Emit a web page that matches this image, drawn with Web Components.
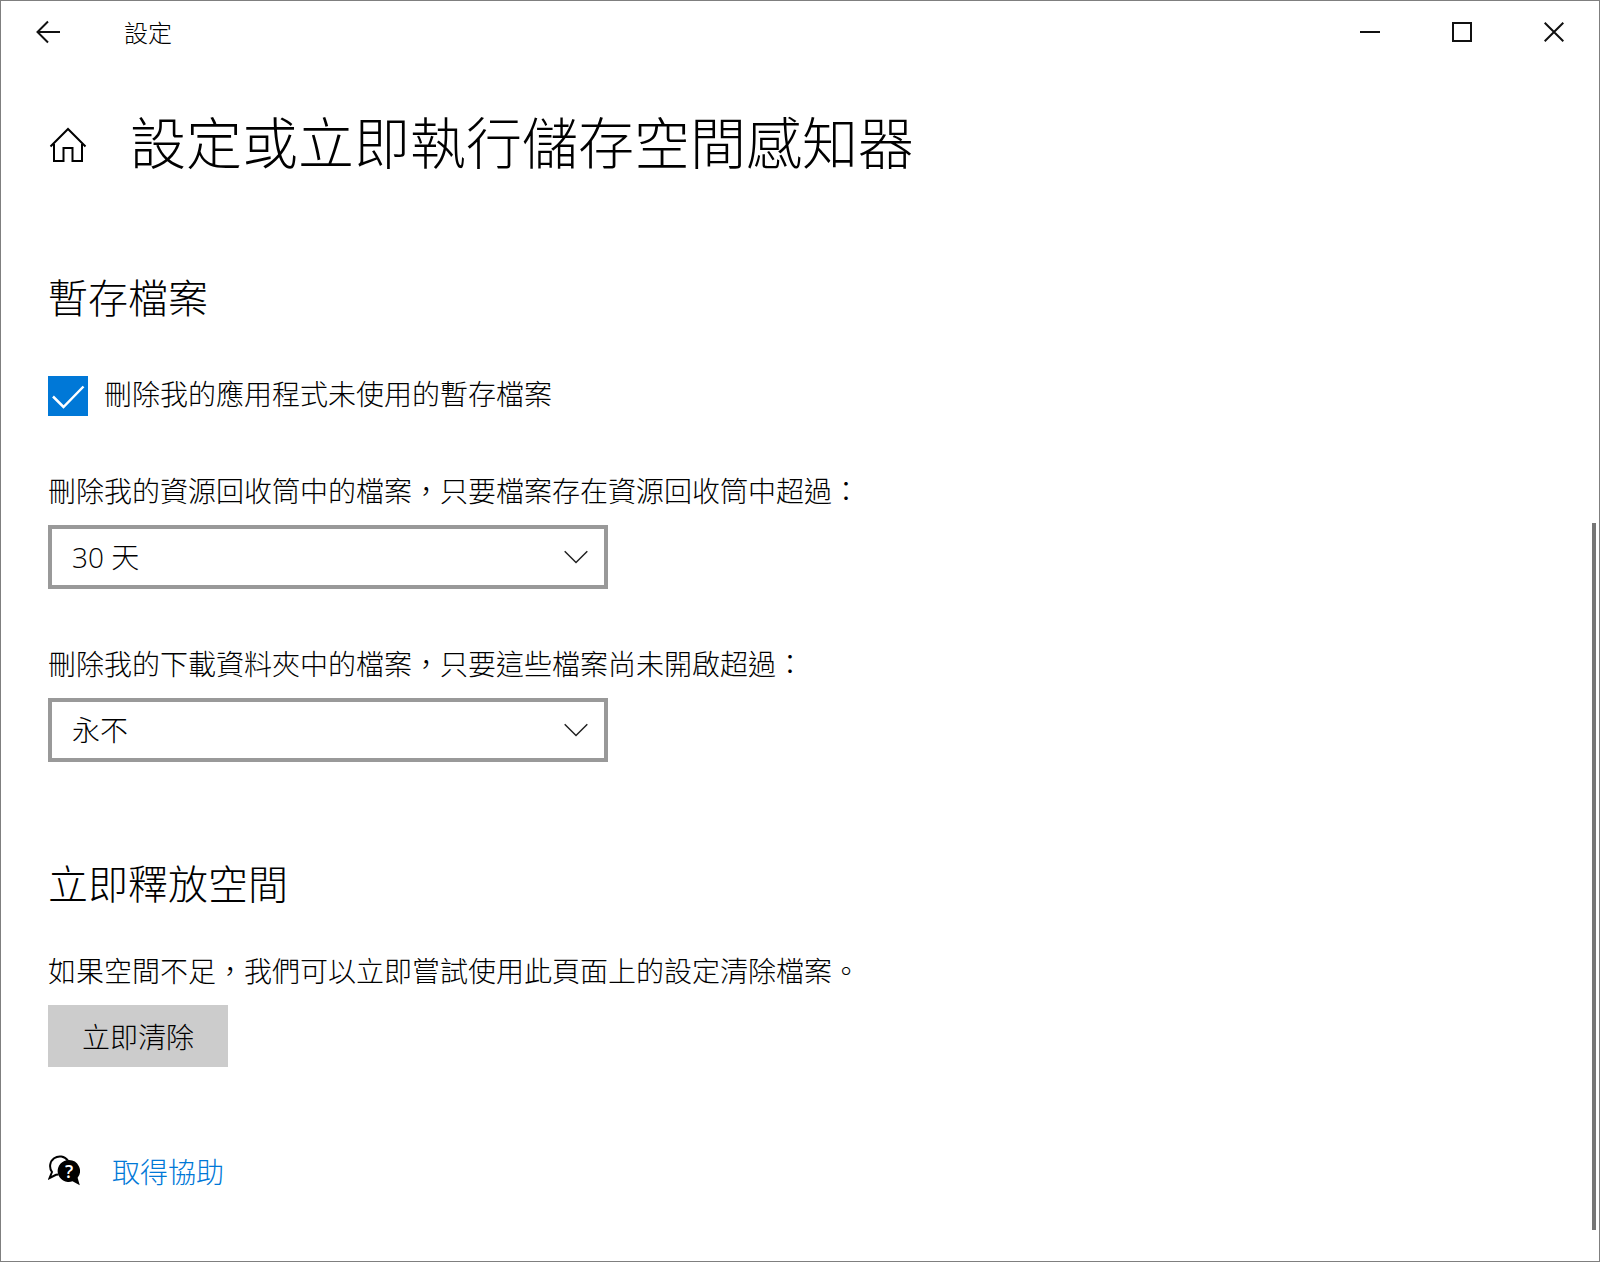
<!DOCTYPE html>
<html lang="zh-Hant">
<head>
<meta charset="utf-8">
<title>設定</title>
<style>
    html {
        height: 100%;
    }

    body {
        margin: 0;
        min-height: 100%;
        display: flex;
        flex-direction: column;
        background: #fff;
        color: #000;
        font: 300 28px/40px "Noto Sans CJK TC", sans-serif;
    }
</style>
</head>
<body>
<settings-window>
    <title-bar slot="bar">設定</title-bar>
    <page-header>設定或立即執行儲存空間感知器</page-header>
    <settings-section heading="暫存檔案">
        <check-option checked>刪除我的應用程式未使用的暫存檔案</check-option>
        <select-field options="永不|1 天|14 天|30 天|60 天" value="30 天">刪除我的資源回收筒中的檔案，只要檔案存在資源回收筒中超過：</select-field>
        <select-field options="永不|1 天|14 天|30 天|60 天" value="永不">刪除我的下載資料夾中的檔案，只要這些檔案尚未開啟超過：</select-field>
    </settings-section>
    <settings-section heading="立即釋放空間">
        <action-block label="立即清除">如果空間不足，我們可以立即嘗試使用此頁面上的設定清除檔案。</action-block>
    </settings-section>
    <help-link href="#help">取得協助</help-link>
</settings-window>

<script>
class SettingsWindow extends HTMLElement {
    constructor(){
        super();
        this.attachShadow({mode: 'open'});
        this.shadowRoot.innerHTML = `
        <style>
            :host {
                display: flex;
                flex-direction: column;
                flex: 1;
                position: relative;
                outline: 1px solid #7f7f7f;
                outline-offset: -1px;
            }

            main {
                padding: 40px 48px 48px;
            }

            .thumb {
                position: absolute;
                right: 4px;
                bottom: 32px;
                width: 4px;
                height: 56%;
                background: #767676;
            }
        </style>
        <slot name='bar'></slot>
        <main><slot></slot></main>
        <div class='thumb'></div>`;
    }
}

class TitleBar extends HTMLElement {
    constructor(){
        super();
        this.attachShadow({mode: 'open'});
        this.shadowRoot.innerHTML = `
        <style>
            :host {
                display: flex;
                align-items: stretch;
                height: 64px;
                font-size: 24px;
            }

            button {
                display: flex;
                align-items: center;
                justify-content: center;
                width: 92px;
                padding: 0;
                border: 0;
                background: none;
                color: #111;
            }

            button:active {
                background: #e5e5e5;
            }

            .back {
                width: 96px;
            }

            svg {
                fill: none;
                stroke: currentColor;
                stroke-width: 2;
            }

            .title {
                flex: 1;
                align-self: center;
                padding-left: 28px;
            }

            .controls {
                display: flex;
            }
        </style>
        <button class='back' aria-label='返回'>
            <svg width='24' height='24' viewBox='0 0 24 24'><path d='M24 12H1.5M12 1.5L1.5 12L12 22.5'/></svg>
        </button>
        <span class='title'><slot></slot></span>
        <div class='controls'>
            <button aria-label='最小化'>
                <svg width='20' height='20' viewBox='0 0 20 20'><path d='M0 10H20'/></svg>
            </button>
            <button aria-label='最大化'>
                <svg width='20' height='20' viewBox='0 0 20 20'><path d='M1 1H19V19H1Z'/></svg>
            </button>
            <button aria-label='關閉'>
                <svg width='20' height='20' viewBox='0 0 20 20'><path d='M.7 .7L19.3 19.3M19.3 .7L.7 19.3'/></svg>
            </button>
        </div>`;
    }
}

class PageHeader extends HTMLElement {
    constructor(){
        super();
        this.attachShadow({mode: 'open'});
        this.shadowRoot.innerHTML = `
        <style>
            :host {
                display: flex;
                align-items: center;
                gap: 42px;
            }

            a {
                display: flex;
                color: #000;
            }

            svg {
                fill: none;
                stroke: currentColor;
                stroke-width: 2;
            }

            h1 {
                margin: 0;
                font-size: 56px;
                font-weight: 300;
                line-height: 72px;
            }
        </style>
        <a href='#home' aria-label='首頁'>
            <svg width='40' height='46' viewBox='0 -10 40 46'>
                <path d='M2.5 19.5L20 2L37.5 19.5M6 17V34H15.5V21H24.5V34H34V17'/>
            </svg>
        </a>
        <h1><slot></slot></h1>`;
    }
}

class SettingsSection extends HTMLElement {
    constructor(){
        super();
        this.attachShadow({mode: 'open'});
        this.shadowRoot.innerHTML = `
        <style>
            :host {
                display: block;
                margin-top: 92px;
            }

            h2 {
                margin: 0 0 40px;
                font-size: 40px;
                font-weight: 300;
                line-height: 56px;
            }

            .items {
                display: flex;
                flex-direction: column;
                align-items: flex-start;
                gap: 54px;
            }
        </style>
        <section>
            <h2></h2>
            <div class='items'><slot></slot></div>
        </section>`;
    }

    connectedCallback(){
        this.shadowRoot.querySelector('h2').textContent = this.getAttribute('heading');
    }
}

class CheckOption extends HTMLElement {
    constructor(){
        super();
        this.attachShadow({mode: 'open'});
        this.shadowRoot.innerHTML = `
        <style>
            :host {
                display: block;
                padding-top: 12px;
            }

            label {
                display: grid;
                grid-template-columns: 40px auto;
                column-gap: 16px;
                line-height: 34px;
            }

            input, svg {
                grid-area: 1 / 1;
                width: 40px;
                height: 40px;
            }

            input {
                appearance: none;
                margin: 0;
                border: 4px solid #333;
            }

            input:checked {
                border: 0;
                background: #0078d7;
            }

            svg {
                fill: none;
                stroke: #fff;
                stroke-width: 2.5;
                pointer-events: none;
            }

            input:not(:checked) + svg {
                visibility: hidden;
            }
        </style>
        <label>
            <input type='checkbox'>
            <svg viewBox='0 0 40 40'><path d='M5 20.5L15.5 31L35.5 10.5'/></svg>
            <span><slot></slot></span>
        </label>`;
    }

    connectedCallback(){
        this.shadowRoot.querySelector('input').checked = this.hasAttribute('checked');
    }
}

class SelectField extends HTMLElement {
    constructor(){
        super();
        this.attachShadow({mode: 'open'});
        this.shadowRoot.innerHTML = `
        <style>
            :host {
                display: block;
            }

            label {
                display: block;
                margin-bottom: 15px;
            }

            .box {
                display: grid;
                width: 560px;
                max-width: 100%;
                align-items: center;
            }

            select, svg {
                grid-area: 1 / 1;
            }

            select {
                appearance: none;
                height: 64px;
                padding: 0 60px 0 20px;
                border: 4px solid #999;
                border-radius: 0;
                background: #fff;
                color: #000;
                font: inherit;
                font-family: "Open Sans", "Noto Sans CJK TC", sans-serif;
            }

            svg {
                justify-self: end;
                margin-right: 20px;
                fill: none;
                stroke: #222;
                stroke-width: 1.5;
                pointer-events: none;
            }
        </style>
        <label for='field'><slot></slot></label>
        <div class='box'>
            <select id='field'></select>
            <svg width='24' height='14' viewBox='0 0 24 14'><path d='M.7 1.2L12 12.5L23.3 1.2'/></svg>
        </div>`;
    }

    connectedCallback(){
        const select = this.shadowRoot.querySelector('select');
        this.getAttribute('options').split('|').forEach(text => {
            select.add(new Option(text, text));
        });
        select.value = this.getAttribute('value');
    }
}

class ActionBlock extends HTMLElement {
    constructor(){
        super();
        this.attachShadow({mode: 'open'});
        this.shadowRoot.innerHTML = `
        <style>
            :host {
                display: block;
            }

            p {
                margin: 0 0 15px;
            }

            button {
                height: 62px;
                padding: 0 34px;
                border: 0;
                background: #ccc;
                color: #000;
                font: inherit;
            }

            button:active {
                background: #999;
            }
        </style>
        <p><slot></slot></p>
        <button></button>`;
    }

    connectedCallback(){
        this.shadowRoot.querySelector('button').textContent = this.getAttribute('label');
    }
}

class HelpLink extends HTMLElement {
    constructor(){
        super();
        this.attachShadow({mode: 'open'});
        this.shadowRoot.innerHTML = `
        <style>
            :host {
                display: flex;
                align-items: center;
                gap: 32px;
                margin-top: 84px;
            }

            a {
                color: #0078d7;
                text-decoration: none;
            }

            text {
                font: 600 18px "Open Sans", sans-serif;
                fill: #fff;
                text-anchor: middle;
            }
        </style>
        <svg width='32' height='34' viewBox='0 0 32 34' aria-hidden='true'>
            <path d='M19.8 6.4A9.8 9.8 0 1 0 4 18L1.6 24L8 20.8L10.5 20.6' fill='none' stroke='#000' stroke-width='2'/>
            <path d='M21 6A11 11 0 1 0 24.5 27.3L31.8 31.2L29.6 23.8A11 11 0 0 0 21 6Z'/>
            <text x='21' y='24'>?</text>
        </svg>
        <a><slot></slot></a>`;
    }

    connectedCallback(){
        this.shadowRoot.querySelector('a').href = this.getAttribute('href');
    }
}

customElements.define('settings-window', SettingsWindow);
customElements.define('title-bar', TitleBar);
customElements.define('page-header', PageHeader);
customElements.define('settings-section', SettingsSection);
customElements.define('check-option', CheckOption);
customElements.define('select-field', SelectField);
customElements.define('action-block', ActionBlock);
customElements.define('help-link', HelpLink);
</script>
</body>
</html>
